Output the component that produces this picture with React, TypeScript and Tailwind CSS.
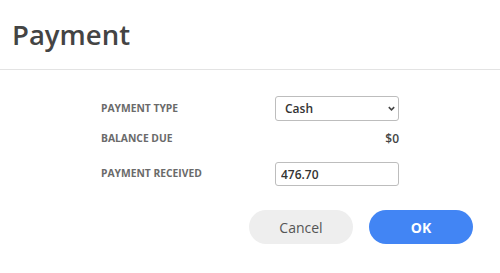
import { useState } from 'react';

const font = { fontFamily: '"Open Sans", "Liberation Sans", sans-serif' };

export default function App() {
  const [type, setType] = useState('Cash');
  const [received, setReceived] = useState('476.70');

  return (
    <div className="h-[273px] w-[500px] bg-white" style={font}>
      <div className="flex h-[70px] items-center border-b border-[#e3e3e3] px-3">
        <h1 className="text-[27.5px] font-semibold text-[#444444]">Payment</h1>
      </div>

      <div className="mx-auto mt-[26px] w-[298px] text-[10.3px]">
        <div className="flex h-[25px] items-center justify-between">
          <span className="font-bold text-[#6a6a6a]">PAYMENT TYPE</span>
          <div className="relative w-[124px]">
            <select
              value={type}
              onChange={(e) => setType(e.target.value)}
              className="h-[25px] w-full appearance-none rounded-[3px] border border-[#bdbdbd] bg-white pl-[9px] text-[12px] font-semibold text-[#333333] outline-none"
            >
              <option>Cash</option>
              <option>Check</option>
              <option>Card</option>
            </select>
            <svg
              viewBox="0 0 10 10"
              className="pointer-events-none absolute right-[3px] top-[8px] h-[9px] w-[9px]"
            >
              <path d="M2 3.5 L5 6.5 L8 3.5" fill="none" stroke="#444" strokeWidth="1.7" />
            </svg>
          </div>
        </div>

        <div className="mt-[6px] flex h-[24px] items-center justify-between">
          <span className="font-bold text-[#6a6a6a]">BALANCE DUE</span>
          <span className="text-[12px] font-semibold text-[#444444]">$0</span>
        </div>

        <div className="mt-[11px] flex h-[24px] items-center justify-between">
          <span className="font-bold text-[#6a6a6a]">PAYMENT RECEIVED</span>
          <input
            value={received}
            onChange={(e) => setReceived(e.target.value)}
            className="h-[24px] w-[124px] rounded-[3px] border border-[#bdbdbd] px-[5px] text-[12px] font-semibold text-[#333333] outline-none"
          />
        </div>
      </div>

      <div className="mt-[24px] flex justify-end gap-4 pr-[27px]">
        <button
          type="button"
          className="h-[34px] w-[104px] rounded-full bg-[#eeeeee] text-[14px] text-[#555555]"
        >
          Cancel
        </button>
        <button
          type="button"
          className="h-[34px] w-[104px] rounded-full bg-[#4285f4] text-[14px] font-bold text-white"
        >
          OK
        </button>
      </div>
    </div>
  );
}
